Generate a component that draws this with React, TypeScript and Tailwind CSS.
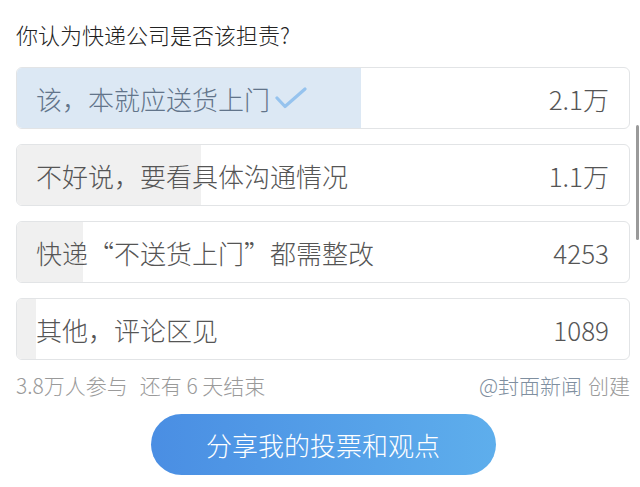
import React from "react";

const font = { fontFamily: '"Noto Sans CJK SC", "Noto Sans", sans-serif' };

type Opt = { label: React.ReactNode; count: string; fill: number; selected?: boolean };

const options: Opt[] = [
  { label: "该，本就应送货上门", count: "2.1万", fill: 344, selected: true },
  { label: "不好说，要看具体沟通情况", count: "1.1万", fill: 184 },
  { label: "快递“不送货上门”都需整改", count: "4253", fill: 66 },
  { label: "其他，评论区见", count: "1089", fill: 19 },
];

export default function App() {
  return (
    <div
      className="relative w-[640px] h-[487px] overflow-hidden bg-white pl-4 pr-[10px]"
      style={font}
    >
      <div className="h-[67px] pt-[19px] text-[22px] leading-[30px] text-[#222222] font-light">
        你认为快递公司是否该担责?
      </div>
      <div className="flex flex-col gap-[15px]">
        {options.map((o, i) => (
          <div
            key={i}
            className="relative h-[62px] overflow-hidden rounded-[6px] border border-[#e2e4e6] bg-white"
          >
            <div
              className={
                o.selected
                  ? "absolute left-0 top-0 h-full bg-[#dce8f4]"
                  : "absolute left-0 top-0 h-full bg-[#f0f0f0]"
              }
              style={{ width: o.fill }}
            />
            <div className="relative flex h-full items-center justify-between pl-[19px] pr-[20px] font-light">
              <div
                className={
                  o.selected
                    ? "flex items-center text-[26px] text-[#62748a]"
                    : "flex items-center text-[26px] text-[#555555]"
                }
              >
                <span>{o.label}</span>
                {o.selected && (
                  <svg width="32" height="24" viewBox="0 0 32 24" className="ml-[5px]">
                    <path
                      d="M2 12 L10 20.5 L30 3"
                      fill="none"
                      stroke="#96c3ee"
                      strokeWidth="3.2"
                      strokeLinecap="round"
                      strokeLinejoin="round"
                    />
                  </svg>
                )}
              </div>
              <div className="text-[26px] text-[#555555]">{o.count}</div>
            </div>
          </div>
        ))}
      </div>
      <div className="mt-[12px] flex items-center justify-between text-[21px] leading-[26px] text-[#9a9a9a] font-light">
        <div>
          3.8万人参与<span className="ml-[12px]">还有 6 天结束</span>
        </div>
        <div>
          <span className="text-[#7f8fa0]">@封面新闻</span>
          <span className="ml-[6px]">创建</span>
        </div>
      </div>
      <div className="mt-[16px] flex justify-center">
        <div className="flex h-[61px] w-[345px] items-center justify-center rounded-full bg-gradient-to-r from-[#4a8ee3] to-[#5eaeec] text-[26px] text-white font-light">
          分享我的投票和观点
        </div>
      </div>
      <div className="absolute right-[1px] top-[125px] h-[115px] w-[3px] rounded-full bg-[#9a9a9a]" />
    </div>
  );
}
